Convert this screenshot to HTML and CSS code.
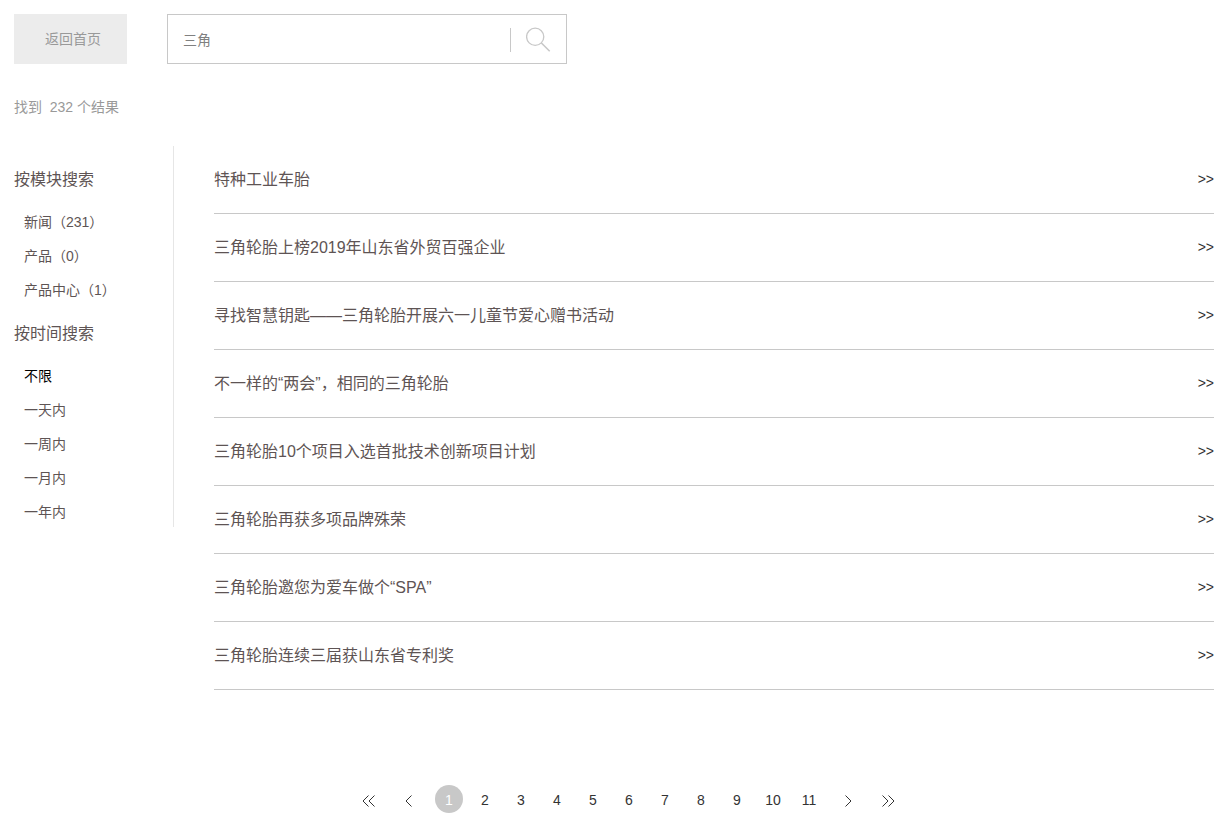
FILE: index.html
```html
<!DOCTYPE html>
<html lang="zh-CN">
<head>
<meta charset="utf-8">
<meta name="viewport" content="width=device-width, initial-scale=1">
<title>搜索结果</title>
<link rel="stylesheet" href="styles.css">
</head>
<body>
<div class="page">
  <header class="topbar">
    <a class="home-link" href="#">返回首页</a>
    <form class="search" role="search">
      <input class="search-input" type="text" value="三角" aria-label="搜索">
      <button class="search-button" type="button" aria-label="搜索">
        <svg width="26" height="26" viewBox="0 0 26 26" fill="none" stroke="#c8c8c8"><circle cx="9.200" cy="9.800" r="8.600" stroke-width="1.300"/><path d="M15.400 16L23.700 24.300" stroke-width="1.600"/></svg>
      </button>
    </form>
  </header>
  <p class="summary">找到&nbsp; 232 个结果</p>
  <div class="content">
    <aside class="filters">
      <h2 class="filter-title">按模块搜索</h2>
      <ul class="filter-list">
        <li><a href="#">新闻（231）</a></li>
        <li><a href="#">产品（0）</a></li>
        <li><a href="#">产品中心（1）</a></li>
      </ul>
      <h2 class="filter-title">按时间搜索</h2>
      <ul class="filter-list">
        <li><a class="active" href="#">不限</a></li>
        <li><a href="#">一天内</a></li>
        <li><a href="#">一周内</a></li>
        <li><a href="#">一月内</a></li>
        <li><a href="#">一年内</a></li>
      </ul>
    </aside>
    <main class="results">
      <a class="result" href="#"><span>特种工业车胎</span><span class="more">&gt;&gt;</span></a>
      <a class="result" href="#"><span>三角轮胎上榜2019年山东省外贸百强企业</span><span class="more">&gt;&gt;</span></a>
      <a class="result" href="#"><span>寻找智慧钥匙——三角轮胎开展六一儿童节爱心赠书活动</span><span class="more">&gt;&gt;</span></a>
      <a class="result" href="#"><span>不一样的“两会”，相同的三角轮胎</span><span class="more">&gt;&gt;</span></a>
      <a class="result" href="#"><span>三角轮胎10个项目入选首批技术创新项目计划</span><span class="more">&gt;&gt;</span></a>
      <a class="result" href="#"><span>三角轮胎再获多项品牌殊荣</span><span class="more">&gt;&gt;</span></a>
      <a class="result" href="#"><span>三角轮胎邀您为爱车做个“SPA”</span><span class="more">&gt;&gt;</span></a>
      <a class="result" href="#"><span>三角轮胎连续三届获山东省专利奖</span><span class="more">&gt;&gt;</span></a>
    </main>
  </div>
  <nav class="pager" aria-label="分页">
    <a class="arrow" href="#" aria-label="首页"><svg width="14" height="12" viewBox="0 0 14 12"><path d="M6.500 .5L1 6l5.500 5.500M12.500 .5L7 6l5.500 5.500"/></svg></a>
    <a class="arrow" href="#" aria-label="上一页"><svg width="8" height="12" viewBox="0 0 8 12"><path d="M6.500 .5L1 6l5.500 5.500"/></svg></a>
    <div class="pages">
      <a class="current" href="#" aria-current="page">1</a>
      <a href="#">2</a>
      <a href="#">3</a>
      <a href="#">4</a>
      <a href="#">5</a>
      <a href="#">6</a>
      <a href="#">7</a>
      <a href="#">8</a>
      <a href="#">9</a>
      <a href="#">10</a>
      <a href="#">11</a>
    </div>
    <a class="arrow" href="#" aria-label="下一页"><svg width="8" height="12" viewBox="0 0 8 12"><path d="M1.500 .5L7 6l-5.500 5.500"/></svg></a>
    <a class="arrow" href="#" aria-label="末页"><svg width="14" height="12" viewBox="0 0 14 12"><path d="M1.500 .5L7 6l-5.500 5.500M7.500 .5L13 6l-5.500 5.500"/></svg></a>
  </nav>
</div>
</body>
</html>
```
FILE: styles.css
```css
* {
  box-sizing: border-box;
}

body {
  margin: 0;
  background: #fff;
  color: #5e5454;
  font: 14px/24px "Liberation Sans", "Noto Sans CJK SC", sans-serif;
}

a {
  color: inherit;
  text-decoration: none;
}

.page {
  padding: 14px 16px 0 14px;
}

.topbar {
  display: flex;
  gap: 40px;
}

.home-link {
  padding: 0 26px 0 31px;
  background: #ececec;
  color: #999;
  line-height: 50px;
}

.search {
  display: flex;
  align-items: center;
  width: 400px;
  height: 50px;
  border: 1px solid #c8c8c8;
}

.search-input {
  flex: 1;
  min-width: 0;
  height: 48px;
  padding: 0 15px;
  border: 0;
  outline: 0;
  background: none;
  color: #808080;
  font: inherit;
}

.search-button {
  display: flex;
  align-items: center;
  justify-content: center;
  width: 56px;
  height: 24px;
  margin-top: 2px;
  padding: 0;
  border: 0;
  border-left: 1px solid #c8c8c8;
  background: none;
}

.summary {
  margin: 31px 0 27px;
  color: #999;
}

.content {
  display: flex;
  align-items: flex-start;
  gap: 40px;
}

.filters {
  width: 160px;
  padding: 22px 0 3px;
  border-right: 1px solid #e6e6e6;
}

.filter-title {
  margin: 0 0 18px;
  font-size: 16px;
  font-weight: 400;
}

.filter-list {
  display: grid;
  gap: 10px;
  margin: 0 0 20px;
  padding: 0 0 0 10px;
  list-style: none;
}

.filter-list:last-child {
  margin-bottom: 0;
}

.active {
  color: #000;
}

.results {
  flex: 1;
}

.result {
  display: flex;
  justify-content: space-between;
  padding: 22px 0 21px;
  border-bottom: 1px solid #c8c8c8;
  font-size: 16px;
}

.more {
  color: #333;
  font-size: 14px;
  line-height: 22px;
}

.pager {
  display: flex;
  align-items: center;
  justify-content: center;
  gap: 8px;
  padding-left: 29px;
  margin-top: 95px;
  color: #333;
}

.pages {
  display: flex;
  gap: 8px;
  padding: 0 1px 0 2px;
}

.pages a {
  width: 28px;
  height: 28px;
  border-radius: 50%;
  line-height: 30px;
  text-align: center;
}

.pages .current {
  background: #c8c8c8;
  color: #fff;
}

.arrow {
  display: flex;
  justify-content: center;
  width: 32px;
  padding-top: 4px;
}

.arrow svg {
  fill: none;
  stroke: #333;
  stroke-width: 1;
}
```
